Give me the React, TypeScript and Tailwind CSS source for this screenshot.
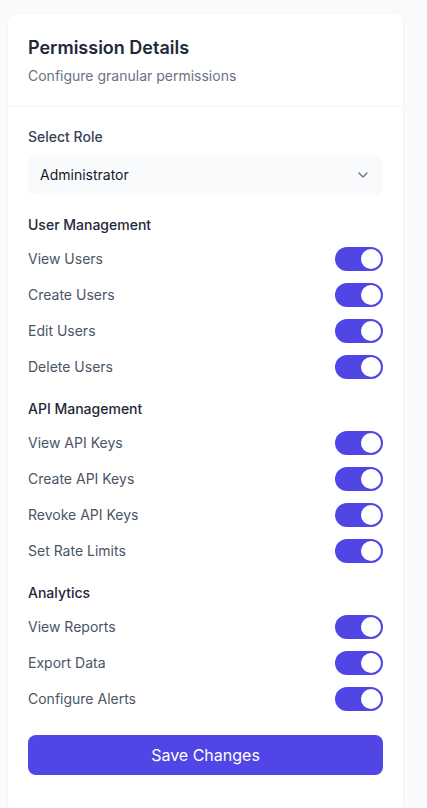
import React, { useState } from 'react';
import { ChevronDown } from 'lucide-react';

const sections = [
  { title: 'User Management', items: ['View Users', 'Create Users', 'Edit Users', 'Delete Users'] },
  { title: 'API Management', items: ['View API Keys', 'Create API Keys', 'Revoke API Keys', 'Set Rate Limits'] },
  { title: 'Analytics', items: ['View Reports', 'Export Data', 'Configure Alerts'] },
];

function Toggle({ on, onChange }: { on: boolean; onChange: () => void }) {
  return (
    <button
      type="button"
      onClick={onChange}
      className={`relative inline-flex h-6 w-12 shrink-0 items-center rounded-full transition-colors ${on ? 'bg-[#4f46e5]' : 'bg-gray-200'}`}
    >
      <span
        className={`inline-block h-5 w-5 rounded-full bg-white transition-transform ${on ? 'translate-x-[26px]' : 'translate-x-0.5'}`}
      />
    </button>
  );
}

export default function App() {
  const [perms, setPerms] = useState<Record<string, boolean>>(() => {
    const init: Record<string, boolean> = {};
    sections.forEach(s => s.items.forEach(i => (init[i] = true)));
    return init;
  });

  return (
    <div className="min-h-screen bg-[#f9fafb] pt-3.5 pl-2" style={{ fontFamily: 'Inter, "Noto Sans", sans-serif' }}>
      <div className="w-[395px] rounded-lg bg-white shadow-[0_1px_3px_rgba(0,0,0,0.06)]">
        <div className="border-b border-gray-100 p-5">
          <h2 className="text-lg font-semibold text-gray-800">Permission Details</h2>
          <p className="mt-1 text-sm text-gray-500">Configure granular permissions</p>
        </div>

        <div className="flex flex-col gap-5 p-5 pb-10">
          <div>
            <label className="block text-sm font-medium text-gray-700">Select Role</label>
            <div className="relative mt-2">
              <select className="h-10 w-full appearance-none rounded-lg bg-gray-50 px-3 text-sm text-gray-900 focus:outline-none">
                <option>Administrator</option>
                <option>Editor</option>
                <option>Viewer</option>
              </select>
              <ChevronDown size={16} className="pointer-events-none absolute right-3 top-3 text-gray-500" />
            </div>
          </div>

          {sections.map(section => (
            <div key={section.title}>
              <h3 className="mb-3 text-sm font-medium text-gray-800">{section.title}</h3>
              <div className="flex flex-col gap-3">
                {section.items.map(item => (
                  <div key={item} className="flex items-center justify-between">
                    <span className="text-sm text-gray-600">{item}</span>
                    <Toggle on={perms[item]} onChange={() => setPerms({ ...perms, [item]: !perms[item] })} />
                  </div>
                ))}
              </div>
            </div>
          ))}

          <button
            type="button"
            className="mt-1 h-10 w-full rounded-lg bg-[#4f46e5] text-base text-white hover:bg-[#4338ca]"
          >
            Save Changes
          </button>
        </div>
      </div>
    </div>
  );
}
